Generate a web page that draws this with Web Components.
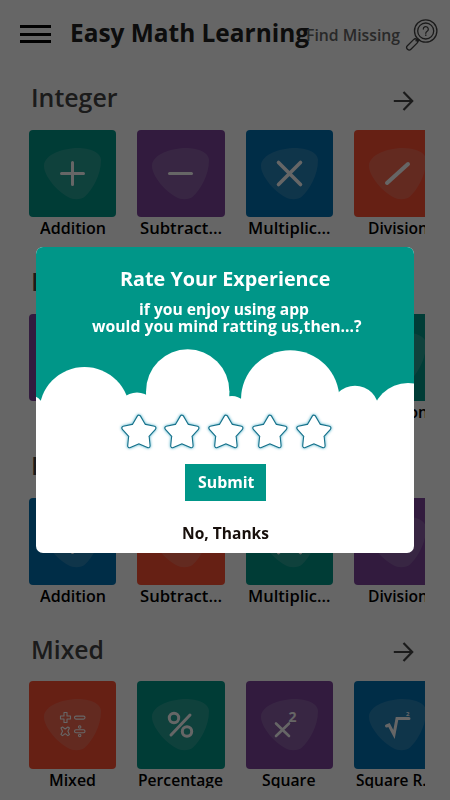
<!DOCTYPE html>
<html lang="en"><head><meta charset="utf-8"><title>Easy Math Learning</title>
<style>
html,body{margin:0;height:100%;overflow:hidden;background:#fff;font-family:"Open Sans","Noto Sans",sans-serif}
</style></head><body>
<math-app></math-app>
<script>
const define=(name,cls)=>customElements.define(name,cls);

// A single line of text condensed or widened to a given width.
class FitText extends HTMLElement{
  connectedCallback(){
    if(this.shadowRoot)return;
    const r=this.attachShadow({mode:'open'});
    const w=+this.getAttribute('w');
    r.innerHTML=`<style>:host{display:block;flex:none;width:${w}px;white-space:nowrap}
      span{display:inline-block;transform-origin:0 50%}</style><span></span>`;
    const s=r.querySelector('span');
    s.textContent=this.getAttribute('text');
    s.style.transform=`scaleX(${w/s.getBoundingClientRect().width})`;
  }
}

const icons={
  none:'',
  plus:'<path d="M0-11V11M-11 0H11" stroke-width="3"/>',
  minus:'<path d="M-11 0H11" stroke-width="3"/>',
  times:'<path d="M-11-11L11 11M11-11L-11 11" stroke-width="3.600"/>',
  slash:'<path d="M10.500-9.500L-10.500 9.500" stroke-width="4"/>',
  percent:'<circle cx="-6.500" cy="-6.500" r="4.700" stroke-width="3"/><circle cx="6.500" cy="7" r="4.700" stroke-width="3"/><path d="M9.500-9.500L-9.500 10.500" stroke-width="3"/>',
  mixed:`<g stroke-width="1.100"><path d="M-8.500-12h3v3.500h3.500v3h-3.500V-2h-3V-5.500H-12v-3h3.500Z"/>
    <rect x="2" y="-8.400" width="10.500" height="3" rx="1.500"/>
    <path d="M-11.500 3.500l1.500-1 2.700 2 2.700-2 1.500 1-1.500 3.300 1.500 3.300-1.500 1-2.700-2-2.700 2-1.500-1 1.500-3.300Z"/>
    <rect x="2" y="5.300" width="10.500" height="3" rx="1.500"/><circle cx="7.200" cy="2.500" r="1.200"/><circle cx="7.200" cy="11" r="1.200"/></g>`,
  square:'<path d="M-10-1L3 11.500M3-1L-10 11.500" stroke-width="2.600" transform="translate(-3.500 0)"/><text x="-1" y="-2.500" font-size="14" font-weight="700">2</text>',
  root:'<path d="M-11 1.500L-8.500 0.500L-3.500 10L-.500-6H11.500" stroke-width="3" stroke-linejoin="miter"/><text x="8.500" y="-8.500" font-size="6" font-weight="700">2</text>'
};
class MathTile extends HTMLElement{
  connectedCallback(){
    const r=this.attachShadow({mode:'open'}),a=n=>this.getAttribute(n);
    r.innerHTML=`<style>
      :host{display:flex;flex:none;flex-direction:column;align-items:center;width:87.300px}
      .box{width:100%;height:87.300px;border-radius:4px;background:${a('color')};overflow:hidden}
      svg{display:block;width:87px;height:87px}
      .glyph{fill:none;stroke:#fff;stroke-linecap:round;stroke-linejoin:round}
      text{fill:#fff;stroke:none}
      .label{margin-top:.900px;font-size:15.600px;line-height:20px;font-weight:600;color:#000}
      :host([short]) .label{height:18px;overflow:hidden}
      :host([cut]) .label{margin-right:5px}
    </style><div class="box"><svg viewBox="0 0 87 87">
      <path d="M15 36C15 24 35 18 49 18C60 18 72 22 72 30C72 46 63 60 56 66.500C52 70 44 70 39 67C28 61 15 46 15 36Z" fill="#d9dce0" fill-opacity=".18"/>
      <g class="glyph" transform="translate(43.500 43.500)">${icons[a('icon')]}</g></svg></div>
      <div class="label"><fit-text text="${a('label')}" w="${a('w')}"></fit-text></div>`;
  }
}

class MathSection extends HTMLElement{
  connectedCallback(){
    const r=this.attachShadow({mode:'open'});
    r.innerHTML=`<style>
      :host{display:block;height:183.800px;width:396px;margin-left:29px;overflow:hidden}
      header{display:flex;justify-content:space-between;height:48px;padding:0 10.500px 0 2px;box-sizing:border-box}
      .name{font-size:25px;line-height:30px;font-weight:600;color:#444;padding-top:.400px}
      svg{width:24px;height:24px;margin-top:7px}
      .row{display:flex;gap:21px}
    </style><header><div class="name"><fit-text text="${this.getAttribute('name')}" w="${this.getAttribute('w')}"></fit-text></div>
    <svg viewBox="0 0 24 24" fill="none" stroke="#444" stroke-width="2.200"><path d="M2.800 12H21M12.500 3L21.200 12L12.500 21"/></svg></header>
    <div class="row"><slot></slot></div>`;
  }
}

class AppHeader extends HTMLElement{
  connectedCallback(){
    const r=this.attachShadow({mode:'open'});
    r.innerHTML=`<style>
      :host{display:flex;height:82px;align-items:flex-start;color:#333}
      .menu{display:flex;flex-direction:column;gap:4.800px;width:31px;margin:24.800px 0 0 19.500px}
      .menu i{height:3px;background:#000}
      .title{margin:17.500px 0 0 19.500px;font-size:24.500px;line-height:30px;font-weight:700;color:#222}
      .find{margin:25.200px 0 0 -3px;font-size:15.600px;line-height:20px;font-weight:600;color:#666}
      svg{width:34px;height:34px;margin:17px 0 0 4px}
    </style><div class="menu"><i></i><i></i><i></i></div>
    <div class="title"><fit-text text="Easy Math Learning" w="239"></fit-text></div>
    <div class="find"><fit-text text="Find Missing" w="94"></fit-text></div>
    <svg viewBox="404 17 34 34" fill="none" stroke="#444" stroke-width="1.300" stroke-linecap="round">
      <circle cx="425.700" cy="31" r="11.200"/><circle cx="425.700" cy="31" r="8"/>
      <path d="M423.300 29a2.500 2.500 0 1 1 3.800 2.300q-1.300.8-1.300 2M425.800 35v.4M418 38.500l-2 2.300M419.300 39.800l-2 2"/>
      <rect x="405.500" y="42" width="13.500" height="5" rx="2.400" transform="rotate(-45 412.200 44.500)"/></svg>`;
  }
}

class StarRating extends HTMLElement{
  connectedCallback(){
    const r=this.attachShadow({mode:'open'});
    let p='';
    for(let i=0;i<10;i++){const R=i%2?8.800:16,t=Math.PI*(i/5-.5);p+=`${(22+R*Math.cos(t)).toFixed(2)},${(22+R*Math.sin(t)).toFixed(2)} `}
    const star=`<svg viewBox="0 0 44 44"><polygon class="o" points="${p}"/><polygon class="i" points="${p}"/></svg>`;
    r.innerHTML=`<style>:host{display:flex}
      svg{width:43.800px;height:44px;flex:none;filter:drop-shadow(0 0 1.700px #3fa9c4)}
      polygon{stroke-linejoin:round}.o{fill:#17718a;stroke:#17718a;stroke-width:4.800}.i{fill:#fff;stroke:#fff;stroke-width:2.600}
    </style>${star.repeat(5)}`;
  }
}

class RateDialog extends HTMLElement{
  connectedCallback(){
    const r=this.attachShadow({mode:'open'});
    r.innerHTML=`<style>
      :host{position:fixed;inset:0;display:flex;align-items:flex-start;justify-content:center;background:rgba(0,0,0,.6)}
      .card{display:grid;margin-top:246.600px;width:378px;height:306.400px;border-radius:7px;overflow:hidden;background:#fff}
      .sky,.body{grid-area:1/1}
      .sky{width:378px;height:160px;background:#009688}
      .body{display:flex;flex-direction:column;align-items:center;font-weight:700;color:#fff;z-index:1}
      .t{margin-top:18.400px;font-size:20.300px;line-height:26px}
      .s{margin-top:10px;margin-left:-3px;font-size:15.300px;line-height:17.300px}
      .s2{margin-left:3px;font-size:15.300px;line-height:17.300px}
      star-rating{margin:75.200px 0 0 2px}
      button{all:unset;box-sizing:border-box;margin:9px 0 0 1px;width:81px;height:37px;padding:0 12.500px 1px;background:#009688;font-size:15.600px;line-height:20px}
      .no{margin:22.200px 0 0 1px;font-size:15.600px;line-height:20px;color:#170f0b}
    </style><div class="card">
      <svg class="sky" viewBox="36 246.600 378 160"><g fill="#fff">
        <path d="M36 396.300Q38.500 397 41 400.500H414V407H36Z"/>
        <circle cx="84.500" cy="412" r="45.300"/><circle cx="137" cy="412" r="19.800"/>
        <circle cx="187.700" cy="390.500" r="41.600"/><rect x="146.100" y="390.500" width="83.200" height="16"/>
        <circle cx="232" cy="411" r="15.500"/><circle cx="290.200" cy="399" r="49.200"/>
        <circle cx="355" cy="408.900" r="23.600"/><circle cx="408" cy="418.700" r="36.200"/></g></svg>
      <div class="body">
        <div class="t"><fit-text text="Rate Your Experience" w="210.500"></fit-text></div>
        <div class="s"><fit-text text="if you enjoy using app" w="170"></fit-text></div>
        <div class="s2"><fit-text text="would you mind ratting us,then…?" w="269.500"></fit-text></div>
        <star-rating></star-rating>
        <button><fit-text text="Submit" w="56.500"></fit-text></button>
        <div class="no"><fit-text text="No, Thanks" w="87"></fit-text></div>
      </div></div>`;
  }
}

class MathApp extends HTMLElement{
  connectedCallback(){
    const r=this.attachShadow({mode:'open'});
    const c={t:'#009688',p:'#7d449c',b:'#0071b2',r:'#ff5034'};
    const rows=[
      ['Integer',86.500,[['t','plus','Addition',66],['p','minus','Subtract…',82],['b','times','Multiplic…',82.500],['r','slash','Division',60]]],
      ['Decimal',98,[['p','none','Addition',66],['b','none','Subtract…',82],['r','none','Multiplic…',82.500],['t','slash','Division',60]]],
      ['Fraction',98,[['b','plus','Addition',66],['r','minus','Subtract…',82],['t','times','Multiplic…',82.500],['p','slash','Division',60]]],
      ['Mixed',73,[['r','mixed','Mixed',47],['t','percent','Percentage',85],['p','square','Square',53.500],['b','root','Square R…',79]]]];
    r.innerHTML=`<style>:host{display:block;width:450px;height:800px;overflow:hidden}</style><app-header></app-header>`+
      rows.map(([n,w,ts],i)=>`<math-section name="${n}" w="${w}">`+ts.map((t,j)=>`<math-tile ${i==3?'short':''} ${i==3&&j==3?'cut':''} color="${c[t[0]]}" icon="${t[1]}" label="${t[2]}" w="${t[3]}"></math-tile>`).join('')+`</math-section>`).join('')+`<rate-dialog></rate-dialog>`;
  }
}
define('fit-text',FitText);define('math-tile',MathTile);define('math-section',MathSection);define('app-header',AppHeader);
define('star-rating',StarRating);define('rate-dialog',RateDialog);define('math-app',MathApp);
</script></body></html>
